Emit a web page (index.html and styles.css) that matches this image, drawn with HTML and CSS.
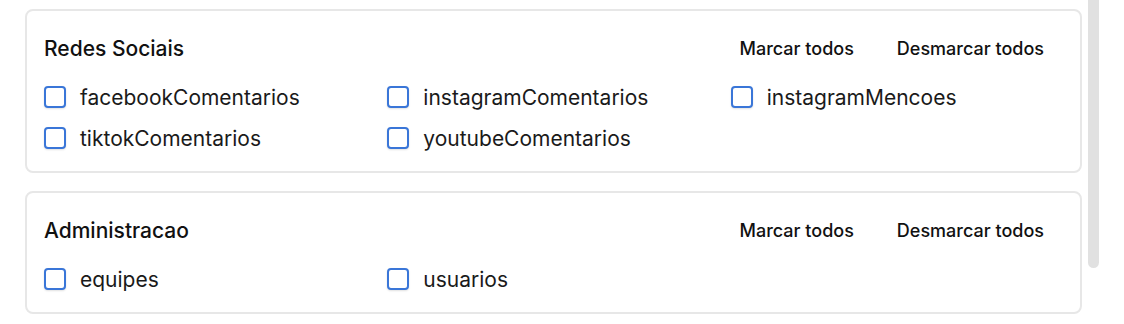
FILE: index.html
```html
<!DOCTYPE html>
<html lang="pt-BR">
<head>
  <meta charset="UTF-8" />
  <meta name="viewport" content="width=device-width, initial-scale=1.0"/>
  <title>Permissoes</title>
  <link rel="stylesheet" href="styles.css">
</head>
<body>

<div class="page">
  <div class="groups">

    <!-- Redes Sociais -->
    <section class="group">
      <div class="group-head">
        <h2 class="group-title">Redes Sociais</h2>
        <div class="group-actions">
          <button class="link-btn">Marcar todos</button>
          <button class="link-btn">Desmarcar todos</button>
        </div>
      </div>
      <div class="perm-grid">
        <label class="perm"><input type="checkbox" /><span>facebookComentarios</span></label>
        <label class="perm"><input type="checkbox" /><span>instagramComentarios</span></label>
        <label class="perm"><input type="checkbox" /><span>instagramMencoes</span></label>
        <label class="perm"><input type="checkbox" /><span>tiktokComentarios</span></label>
        <label class="perm"><input type="checkbox" /><span>youtubeComentarios</span></label>
      </div>
    </section>

    <!-- Administracao -->
    <section class="group">
      <div class="group-head">
        <h2 class="group-title">Administracao</h2>
        <div class="group-actions">
          <button class="link-btn">Marcar todos</button>
          <button class="link-btn">Desmarcar todos</button>
        </div>
      </div>
      <div class="perm-grid">
        <label class="perm"><input type="checkbox" /><span>equipes</span></label>
        <label class="perm"><input type="checkbox" /><span>usuarios</span></label>
      </div>
    </section>

  </div>

  <div class="scroll-track"><div class="scroll-thumb"></div></div>
</div>

</body>
</html>
```

FILE: styles.css
```css
body {
  margin: 0;
  font-family: 'Inter', 'Liberation Sans', sans-serif;
  background: #ffffff;
  color: #171717;
  overflow: hidden;
}

.page {
  display: flex;
  align-items: flex-start;
  height: 324px;
}

.groups {
  width: 1057px;
  margin-left: 25px;
  padding-top: 9px;
  display: flex;
  flex-direction: column;
  gap: 18px;
}

.group {
  border: 2px solid #e7e7e7;
  border-radius: 8px;
  padding: 20px 16px 20px 17px;
}

.group-head {
  display: flex;
  align-items: center;
  justify-content: space-between;
  height: 36px;
}

.group-title {
  margin: 0;
  font-size: 21px;
  font-weight: 450;
  line-height: 26px;
  color: #111;
}

.group-actions {
  display: flex;
  gap: 3px;
}

.link-btn {
  font-family: inherit;
  font-size: 18px;
  font-weight: 450;
  line-height: 22px;
  color: #111;
  background: none;
  border: none;
  padding: 7px 20px;
  cursor: pointer;
}

.perm-grid {
  margin-top: 17px;
  display: grid;
  grid-template-columns: repeat(3, 1fr);
  column-gap: 10px;
  row-gap: 15px;
}

.perm {
  display: flex;
  align-items: center;
  gap: 14px;
  height: 26px;
  font-size: 21px;
  color: #1a1a1a;
  cursor: pointer;
}

.perm input {
  appearance: none;
  -webkit-appearance: none;
  margin: 0;
  width: 22px;
  height: 22px;
  border: 2px solid #3a76d8;
  border-radius: 4px;
  background: #fff;
  box-shadow: 0 1px 2px rgba(0, 0, 0, 0.12);
  flex-shrink: 0;
}

.scroll-track {
  width: 11px;
  margin-left: 6px;
  height: 268px;
}

.scroll-thumb {
  height: 100%;
  background: #e1e1e1;
  border-radius: 0 0 6px 6px;
}
```
